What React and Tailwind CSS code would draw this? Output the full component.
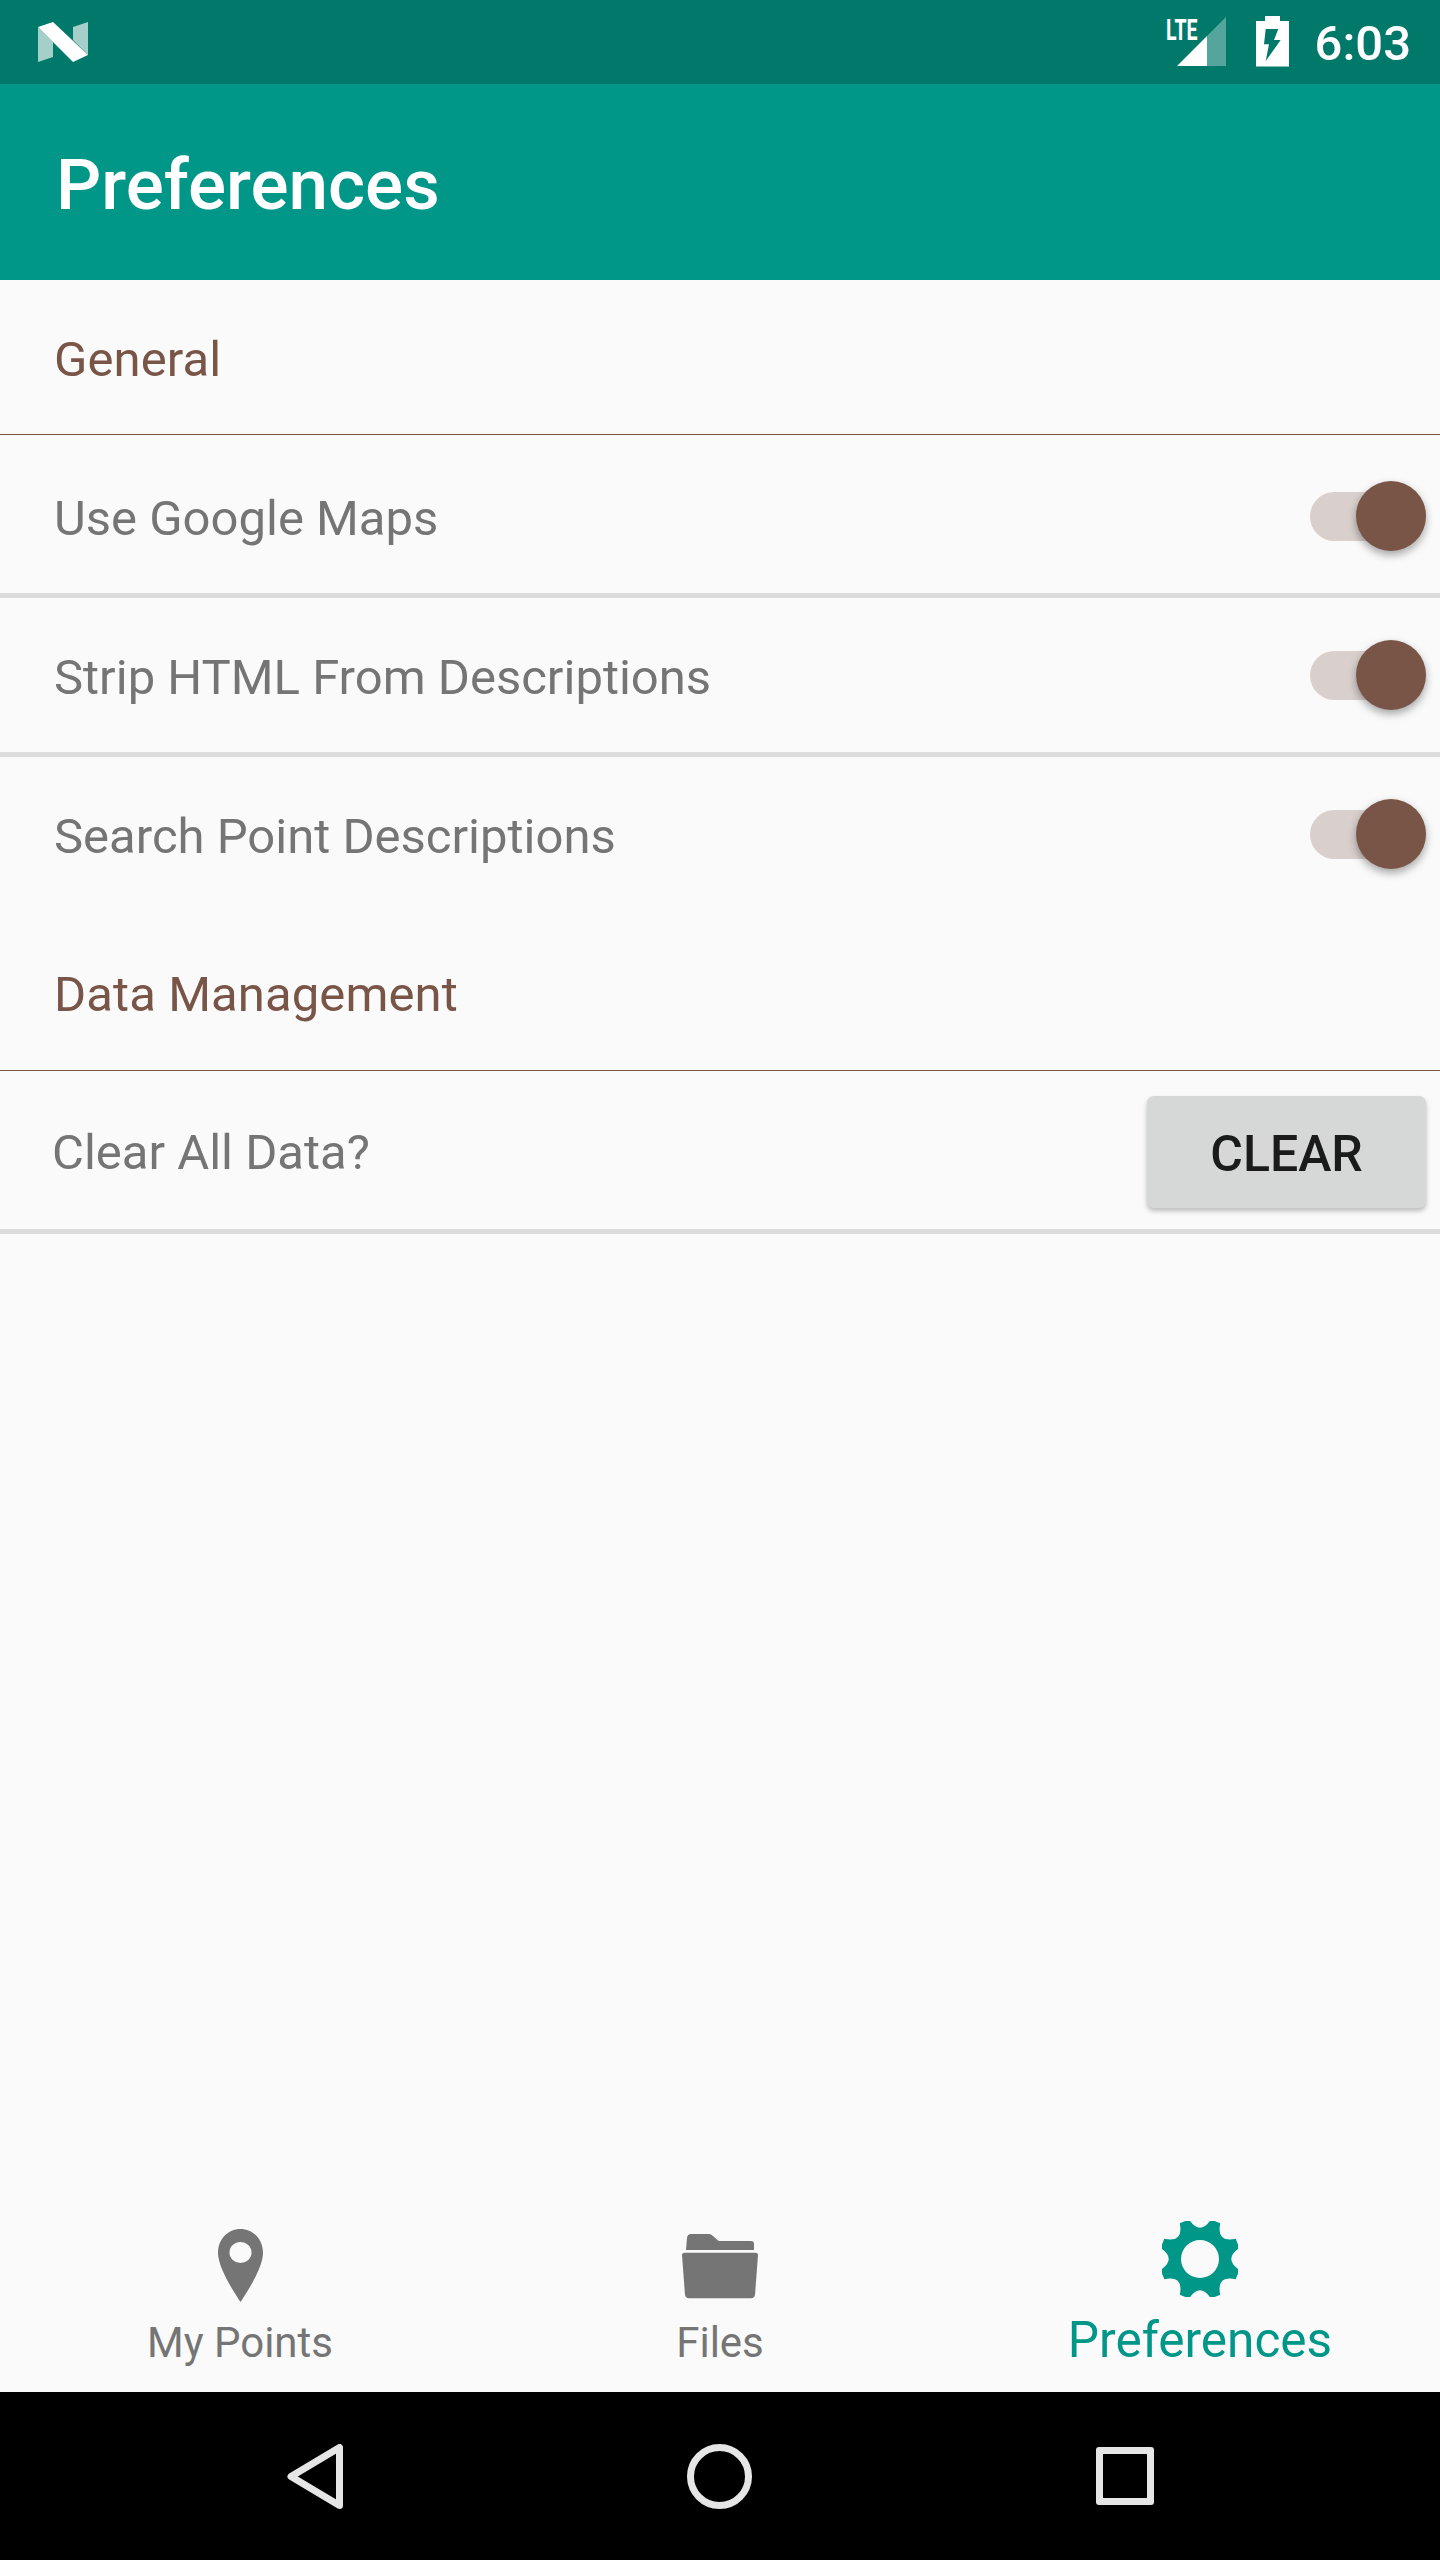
import React from 'react';

// eight scalloped teeth, tips at 22.5deg offsets
const gearPath = () => {
  const pt = (deg, r) => {
    const a = (deg * Math.PI) / 180;
    return `${(38 + r * Math.cos(a)).toFixed(2)} ${(38 + r * Math.sin(a)).toFixed(2)}`;
  };
  let d = '';
  for (let i = 0; i < 8; i++) {
    const mid = 22.5 + 45 * i;
    d += `${i === 0 ? 'M' : 'L'}${pt(mid - 7, 41)} L${pt(mid + 7, 41)} Q${pt(mid + 22.5, 23)} ${pt(mid + 38, 41)} `;
  }
  return d + 'Z';
};

const NLogo = () => (
  <svg width="50" height="40" viewBox="38 22 50 40">
    <polygon points="38,27 38,62 53,57 53,42" fill="#a5d0ca" />
    <polygon points="73,27 88,22 88,55 73,40" fill="#a5d0ca" />
    <polygon points="38,27 53,22 88,55 73,62" fill="#ffffff" />
  </svg>
);

const StatusIcons = () => (
  <div className="flex items-start text-white">
    <span className="mt-[15px] w-[30px] origin-left scale-x-[0.65] text-[30px] leading-none font-bold">LTE</span>
    <svg className="mt-[17px] -ml-[19px]" width="49" height="49" viewBox="0 0 49 49">
      <polygon points="30,19 49,0 49,49 30,49" fill="#ffffff" fillOpacity="0.33" />
      <polygon points="0,49 30,19 30,49" fill="#ffffff" />
    </svg>
    <svg className="mt-[16px] ml-[30px]" width="33" height="51" viewBox="0 0 33 51">
      <path
        d="M9 0H24V5H33V50.5H0V5H9Z M9.7 13 L8 28.3 L13 28.3 L9.7 45 L24.7 24 L18 24 L22.3 13 Z"
        fill="#ffffff"
        fillRule="evenodd"
      />
    </svg>
    <span className="mt-[16px] ml-[26px] text-[49px] leading-[56px] font-medium">6:03</span>
  </div>
);

const Toggle = () => (
  <div className="flex items-center">
    <div className="h-[49px] w-[116px] rounded-full bg-[#d9d0cd]" />
    <div className="-ml-[70px] h-[70px] w-[70px] rounded-full bg-[#795548] shadow-[0_4px_8px_rgba(0,0,0,0.35)]" />
  </div>
);

const SectionTitle = ({ children, className = '' }) => (
  <div className={`flex items-center pl-[54px] text-[49px] tracking-[0.1px] text-[#795548] ${className}`}>{children}</div>
);

const Row = ({ label, children, className = '' }) => (
  <div className={`flex items-center justify-between pr-[14px] text-[49px] text-[#757575] ${className}`}>
    <span className="pt-[5px]">{label}</span>
    {children}
  </div>
);

const Tab = ({ label, active, iconPad, children }) => (
  <div className={`flex flex-col items-center ${iconPad} ${active ? 'pb-[27px] text-[#009688]' : 'pb-[28px] text-[#757575]'}`}>
    {children}
    <span className={`mt-auto leading-none ${active ? 'text-[49.5px]' : 'text-[42px]'}`}>{label}</span>
  </div>
);

export default function App() {
  return (
    <div className="flex h-[2560px] w-full flex-col bg-[#fafafa] font-['Roboto',sans-serif]">
      <div className="flex h-[84px] shrink-0 items-start justify-between bg-[#00796b] pr-[29px]">
        <div className="pt-[22px] pl-[38px]">
          <NLogo />
        </div>
        <StatusIcons />
      </div>
      <header className="flex h-[196px] shrink-0 items-center bg-[#009688] pt-[6px] pl-[56px] text-[71px] font-medium text-white">
        Preferences
      </header>

      <SectionTitle className="h-[154px] pt-[6px]">General</SectionTitle>
      <div className="h-px bg-[#795548]" />
      <Row label="Use Google Maps" className="h-[158px] pt-[4px] pl-[54px]">
        <Toggle />
      </Row>
      <div className="h-[5px] bg-[#dcdcdc]" />
      <Row label="Strip HTML From Descriptions" className="h-[154px] pl-[54px]">
        <Toggle />
      </Row>
      <div className="h-[5px] bg-[#dcdcdc]" />
      <Row label="Search Point Descriptions" className="h-[154px] pl-[54px]">
        <Toggle />
      </Row>

      <SectionTitle className="h-[159px] pt-[8px]">Data Management</SectionTitle>
      <div className="h-px bg-[#795548]" />
      <Row label="Clear All Data?" className="h-[158px] pl-[52px]">
        <button className="mt-[4px] flex h-[112px] w-[279px] items-center justify-center rounded-[7px] bg-[#d6d7d7] pt-[5px] text-[50px] font-medium text-[#1b1b1b] shadow-[0_3px_5px_rgba(0,0,0,0.25)]">
          CLEAR
        </button>
      </Row>
      <div className="h-[5px] bg-[#dcdcdc]" />

      <div className="flex-1" />

      <nav className="grid h-[192px] shrink-0 grid-cols-3">
        <Tab label="My Points" iconPad="pt-[29px]">
          <svg width="45" height="73" viewBox="0 0 45 73">
            <path
              d="M22.5 0C35 0 45 10 45 24C45 38 30 62 22.5 73C15 62 0 38 0 24C0 10 10 0 22.5 0ZM22.5 13A11 10.5 0 1 0 22.5 34A11 10.5 0 1 0 22.5 13Z"
              fill="currentColor"
              fillRule="evenodd"
            />
          </svg>
        </Tab>
        <Tab label="Files" iconPad="pt-[34px]">
          <svg width="76" height="65" viewBox="12 14 76 65" fill="currentColor">
            <path d="M16 30L17 18Q17.5 14 21 14L39 14Q41 14 43 16L48 20.5Q49 21 51 21L81 21Q84 21 84 24L84 30Z" />
            <path d="M12 35Q12 32.7 15 32.7L85 32.7Q88 32.7 88 35L85 75Q84.5 78 81 78.3L19 78.3Q15.5 78 15 75Z" />
          </svg>
        </Tab>
        <Tab label="Preferences" active iconPad="pt-[21px]">
          <svg width="76" height="76" viewBox="0 0 76 76">
            <path d={`${gearPath()} M38 19A19 19 0 1 0 38 57A19 19 0 1 0 38 19Z`} fill="currentColor" fillRule="evenodd" />
          </svg>
        </Tab>
      </nav>

      <div className="grid h-[168px] shrink-0 grid-cols-3 items-center justify-items-center bg-black px-[113px]">
        <svg width="56" height="65" viewBox="0 0 56 65">
          <path d="M52.5 3.5V61.5L4 32.5Z" fill="none" stroke="#e6e6e6" strokeWidth="7" strokeLinejoin="round" />
        </svg>
        <div className="h-[65px] w-[65px] rounded-full border-[7px] border-[#e6e6e6]" />
        <div className="h-[58px] w-[58px] rounded-[3px] border-[7px] border-[#e6e6e6]" />
      </div>
    </div>
  );
}
